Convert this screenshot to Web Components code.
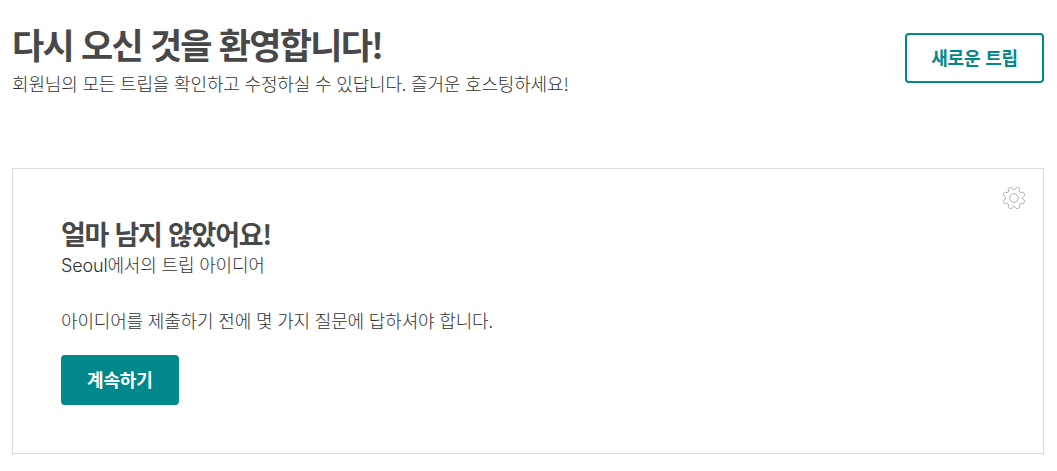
<!DOCTYPE html>
<html lang="ko">
<head>
<meta charset="utf-8">
<title>트립</title>
<style>
  body {
    margin: 0;
    background: #fff;
    color: #484848;
    font-family: "Noto Sans CJK KR", sans-serif;
  }
</style>
</head>
<body>
<trip-dashboard></trip-dashboard>

<script>
const headerTemplate = document.createElement('template');
headerTemplate.innerHTML = `
  <style>
    :host {
      display: flex;
      justify-content: space-between;
      align-items: flex-start;
    }
    h1 {
      margin: 0;
      font-size: 35px;
      line-height: 40px;
      font-weight: 700;
      letter-spacing: -1.75px;
      white-space: nowrap;
    }
    p {
      margin: 0;
      padding-top: 5px;
      color: #303030;
      font-size: 18px;
      line-height: 28px;
      font-weight: 300;
      letter-spacing: -0.17px;
      white-space: nowrap;
    }
    .action {
      padding-top: 9px;
    }
  </style>
  <div>
    <h1><slot name="title"></slot></h1>
    <p><slot name="subtitle"></slot></p>
  </div>
  <div class="action"><slot name="action"></slot></div>
`;

class PageHeader extends HTMLElement {
  constructor() {
    super();
    this.attachShadow({ mode: "open" }).appendChild(headerTemplate.content.cloneNode(true));
  }
}
customElements.define("page-header", PageHeader);

const buttonTemplate = document.createElement('template');
buttonTemplate.innerHTML = `
  <style>
    :host {
      display: inline-block;
      vertical-align: top;
    }
    button {
      display: block;
      box-sizing: border-box;
      height: 50px;
      margin: 0;
      padding: 0 24px 2px;
      border: 2px solid #00888a;
      border-radius: 4px;
      background: #fff;
      color: #00888a;
      font-family: inherit;
      font-size: 18px;
      line-height: 44px;
      font-weight: 700;
      letter-spacing: -0.17px;
      white-space: nowrap;
    }
    :host([primary]) button {
      background: #00888a;
      color: #fff;
    }
  </style>
  <button type="button"><slot></slot></button>
`;

class TripButton extends HTMLElement {
  constructor() {
    super();
    this.attachShadow({ mode: "open" }).appendChild(buttonTemplate.content.cloneNode(true));
  }
}
customElements.define("trip-button", TripButton);

// gear outline with eight teeth
class GearIcon extends HTMLElement {
  constructor() {
    super();
    this.attachShadow({ mode: "open" }).innerHTML = `
      <style>
        :host { display: block; width: 24px; height: 24px; }
        svg { display: block; }
      </style>
      <svg width="24" height="24" viewBox="0 0 24 24" fill="none" stroke="#b0b0b0" stroke-width="1" stroke-linejoin="round">
        <path d="${this.outline()}"/>
        <circle cx="12" cy="12" r="4.3"/>
      </svg>
    `;
  }

  outline() {
    const point = (r, deg) => {
      const a = deg * Math.PI / 180;
      return (12 + r * Math.cos(a)).toFixed(2) + " " + (12 + r * Math.sin(a)).toFixed(2);
    };
    let d = "";
    for (let i = 0; i < 8; i++) {
      const a = i * 45 + 22.5;
      d += (i ? "L" : "M") + point(10, a - 12);
      d += "Q" + point(11.1, a - 11) + " " + point(11.1, a - 6);
      d += "L" + point(11.1, a + 6);
      d += "Q" + point(11.1, a + 11) + " " + point(10, a + 12);
      d += "C" + point(8, a + 14) + " " + point(8, a + 31) + " " + point(10, a + 33);
    }
    return d + "Z";
  }
}
customElements.define("gear-icon", GearIcon);

const cardTemplate = document.createElement('template');
cardTemplate.innerHTML = `
  <style>
    :host {
      display: flex;
      justify-content: space-between;
      align-items: flex-start;
      box-sizing: border-box;
      height: 286px;
      padding: 17px 17px 48px 48px;
      border: 1px solid #dbdbdb;
    }
    .content {
      padding-top: 31px;
      white-space: nowrap;
    }
    h2 {
      margin: 0;
      font-size: 27px;
      line-height: 34px;
      font-weight: 700;
      letter-spacing: -1.25px;
    }
    p {
      margin: 0;
      color: #303030;
      font-size: 18px;
      line-height: 28px;
      font-weight: 300;
      letter-spacing: -0.17px;
    }
    .place {
      padding-top: 1px;
      font-family: Inter, "Noto Sans CJK KR", sans-serif;
    }
    .message {
      margin: 26px 0 21px;
    }
  </style>
  <div class="content">
    <h2><slot name="title"></slot></h2>
    <p class="place"><slot name="place"></slot></p>
    <p class="message"><slot name="message"></slot></p>
    <slot name="action"></slot>
  </div>
  <gear-icon></gear-icon>
`;

class TripCard extends HTMLElement {
  constructor() {
    super();
    this.attachShadow({ mode: "open" }).appendChild(cardTemplate.content.cloneNode(true));
  }
}
customElements.define("trip-card", TripCard);

const dashboardTemplate = document.createElement('template');
dashboardTemplate.innerHTML = `
  <style>
    :host {
      display: block;
      padding: 24px 13px 0 12px;
    }
    page-header {
      height: 144px;
    }
  </style>
  <page-header>
    <span slot="title">다시 오신 것을 환영합니다!</span>
    <span slot="subtitle">회원님의 모든 트립을 확인하고 수정하실 수 있답니다. 즐거운 호스팅하세요!</span>
    <trip-button slot="action">새로운 트립</trip-button>
  </page-header>
  <trip-card>
    <span slot="title">얼마 남지 않았어요!</span>
    <span slot="place">Seoul에서의 트립 아이디어</span>
    <span slot="message">아이디어를 제출하기 전에 몇 가지 질문에 답하셔야 합니다.</span>
    <trip-button slot="action" primary>계속하기</trip-button>
  </trip-card>
`;

class TripDashboard extends HTMLElement {
  constructor() {
    super();
    this.attachShadow({ mode: "open" }).appendChild(dashboardTemplate.content.cloneNode(true));
  }
}
customElements.define("trip-dashboard", TripDashboard);
</script>
</body>
</html>
